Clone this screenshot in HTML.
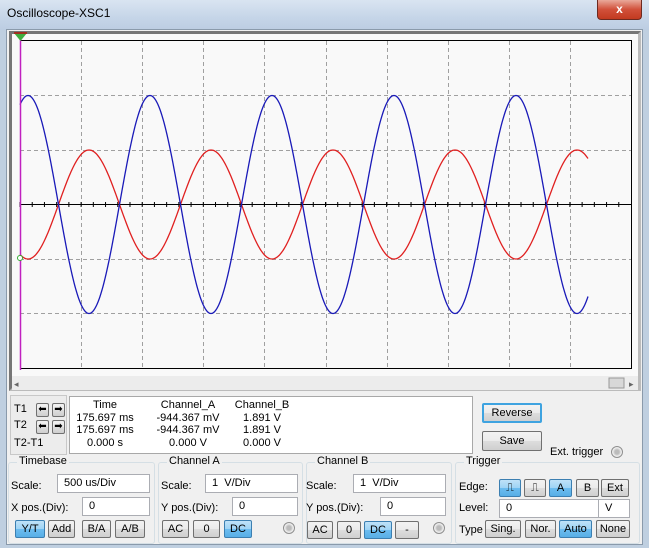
<!DOCTYPE html>
<html><head><meta charset="utf-8"><style>
*{margin:0;padding:0;box-sizing:border-box}
body{width:649px;height:548px;overflow:hidden;background:#bfcfe0;font-family:"Liberation Sans",sans-serif;font-size:11px;color:#000;position:relative}
.a{position:absolute}
.tb{left:0;top:0;width:649px;height:30px;background:linear-gradient(180deg,#d9e4f1,#c5d5e8 60%,#bccde2)}
.body{left:6px;top:29px;width:637px;height:516px;background:#f0f0f0;border:1px solid #8a9aab}
.btn{position:absolute;height:18px;border:1px solid #707070;border-radius:2px;background:linear-gradient(#f2f2f2,#ebebeb 50%,#dddddd 51%,#cfcfcf);text-align:center;line-height:16px;font-size:11px}
.blue{background:linear-gradient(#bfe2f8,#9ed3f5 50%,#6cbdf0 51%,#58aee6);border-color:#3c7fb1}
.fld{position:absolute;height:19px;background:#fff;border:1px solid #abadb3;padding-left:6px;line-height:17px}
.grp{position:absolute;border:1px solid #d5dfe5;border-radius:3px;top:462px;height:82px}
.gl{position:absolute;top:-8px;left:8px;background:#f0f0f0;padding:0 2px}
.rad{position:absolute;width:12px;height:12px;border-radius:50%;border:1px solid #8f8f8f;background:radial-gradient(#bbb 30%,#eee 60%)}
</style></head><body>
<div class="a tb"></div>
<div class="a" style="left:7px;top:6px;font-size:12px">Oscilloscope-XSC1</div>
<div class="a" style="left:597px;top:0;width:45px;height:20px;border:1px solid #6d2a20;border-top:none;border-radius:0 0 4px 4px;background:linear-gradient(#e9a99a,#d1503a 50%,#c23a20);color:#fff;font-weight:bold;text-align:center;line-height:18px;font-size:12px">x</div>
<div class="a body"></div>
<div class="a" style="left:9px;top:31px;width:632px;height:360px;border:3px solid #767676;border-right-color:#bbb;border-bottom-color:#bbb;background:#f9f9f9"></div>
<svg class="a" style="left:0;top:0" width="649" height="400">
<g stroke="#a0a0a0" stroke-dasharray="4,3" stroke-width="1">
<line x1="81.5" y1="41" x2="81.5" y2="368"/><line x1="142.5" y1="41" x2="142.5" y2="368"/><line x1="203.5" y1="41" x2="203.5" y2="368"/><line x1="264.5" y1="41" x2="264.5" y2="368"/><line x1="326.5" y1="41" x2="326.5" y2="368"/><line x1="387.5" y1="41" x2="387.5" y2="368"/><line x1="448.5" y1="41" x2="448.5" y2="368"/><line x1="509.5" y1="41" x2="509.5" y2="368"/><line x1="570.5" y1="41" x2="570.5" y2="368"/>
<line x1="20" y1="95.5" x2="631" y2="95.5"/><line x1="20" y1="150.5" x2="631" y2="150.5"/><line x1="20" y1="259.5" x2="631" y2="259.5"/><line x1="20" y1="313.5" x2="631" y2="313.5"/>
</g>
<line x1="20" y1="204.5" x2="631" y2="204.5" stroke="#000"/>
<g id="ticks" stroke="#000"></g>
<rect x="20.5" y="40.5" width="611" height="328" fill="none" stroke="#000"/>
<polyline id="red" fill="none" stroke="#e02020" stroke-width="1.3"/>
<polyline id="blue" fill="none" stroke="#1a1ab8" stroke-width="1.3"/>
<line x1="20.5" y1="36" x2="20.5" y2="370" stroke="#c020c0" stroke-width="1.5"/>
<polygon points="14,33 27,33 20.5,41" fill="#3fae3f"/>
<rect x="14" y="32" width="13" height="2" fill="#a03020"/>
<circle cx="20" cy="258" r="2.5" fill="#fff" stroke="#3a3"/>
<rect x="12" y="376" width="626" height="14" fill="#ececec"/>
<text x="14" y="387" font-size="9" fill="#666">◂</text>
<rect x="609" y="378" width="15" height="10" fill="#d8d8d8" stroke="#999"/>
<text x="629" y="387" font-size="9" fill="#666">▸</text>
</svg>
<script>
var t=document.getElementById('ticks'),s='';
for(var x=20;x<=631;x+=12.22){s+='<line x1="'+x+'" y1="202" x2="'+x+'" y2="207"/>';}
t.innerHTML=s;
var r='',b='';
for(var x=20;x<=588;x+=1){var p=2*Math.PI*(x-28)/122;
b+=x+','+(204.5-109*Math.cos(p)).toFixed(1)+' ';r+=x+','+(204.5+54.5*Math.cos(p)).toFixed(1)+' ';}
document.getElementById('red').setAttribute('points',r);
document.getElementById('blue').setAttribute('points',b);
</script>
<div class="a" style="left:10px;top:395px;width:57px;height:60px;border:1px solid #c8c8c8;background:#ececec"></div>
<div class="a" style="left:14px;top:403px">T1</div><div class="a" style="left:14px;top:419px">T2</div><div class="a" style="left:14px;top:437px">T2-T1</div>
<div class="btn" style="left:36px;top:403px;width:13px;height:14px;line-height:12px;font-size:10px">⬅</div><div class="btn" style="left:52px;top:403px;width:13px;height:14px;line-height:12px;font-size:10px">➡</div>
<div class="btn" style="left:36px;top:420px;width:13px;height:14px;line-height:12px;font-size:10px">⬅</div><div class="btn" style="left:52px;top:420px;width:13px;height:14px;line-height:12px;font-size:10px">➡</div>
<div class="a" style="left:69px;top:396px;width:404px;height:58px;background:#fff;border:1px solid #a8a8a8"></div>
<div class="a" style="left:75px;top:399px;width:60px;text-align:center;line-height:12.5px">Time<br>175.697 ms<br>175.697 ms<br>0.000 s</div>
<div class="a" style="left:148px;top:399px;width:80px;text-align:center;line-height:12.5px">Channel_A<br>-944.367 mV<br>-944.367 mV<br>0.000 V</div>
<div class="a" style="left:227px;top:399px;width:70px;text-align:center;line-height:12.5px">Channel_B<br>1.891 V<br>1.891 V<br>0.000 V</div>
<div class="btn" style="left:482px;top:403px;width:60px;height:20px;border:2px solid #3ea3e0;line-height:16px">Reverse</div>
<div class="btn" style="left:482px;top:431px;width:60px;height:20px;line-height:18px">Save</div>
<div class="a" style="left:550px;top:446px">Ext. trigger</div><div class="rad" style="left:611px;top:446px"></div>
<div class="grp" style="left:8px;width:147px"><span class="gl">Timebase</span></div>
<div class="grp" style="left:158px;width:145px"><span class="gl">Channel A</span></div>
<div class="grp" style="left:306px;width:146px"><span class="gl">Channel B</span></div>
<div class="grp" style="left:455px;width:185px"><span class="gl">Trigger</span></div>
<div class="a" style="left:11px;top:480px">Scale:</div><div class="fld" style="left:57px;top:474px;width:93px">500 us/Div</div>
<div class="a" style="left:11px;top:502px">X pos.(Div):</div><div class="fld" style="left:82px;top:497px;width:68px">0</div>
<div class="btn blue" style="left:15px;top:520px;width:30px">Y/T</div><div class="btn" style="left:48px;top:520px;width:27px">Add</div><div class="btn" style="left:82px;top:520px;width:29px">B/A</div><div class="btn" style="left:115px;top:520px;width:30px">A/B</div>
<div class="a" style="left:161px;top:480px">Scale:</div><div class="fld" style="left:205px;top:474px;width:93px">1 &nbsp;V/Div</div>
<div class="a" style="left:161px;top:502px">Y pos.(Div):</div><div class="fld" style="left:232px;top:497px;width:66px">0</div>
<div class="btn" style="left:162px;top:520px;width:27px">AC</div><div class="btn" style="left:193px;top:520px;width:27px">0</div><div class="btn blue" style="left:224px;top:520px;width:28px">DC</div><div class="rad" style="left:283px;top:522px"></div>
<div class="a" style="left:306px;top:480px">Scale:</div><div class="fld" style="left:353px;top:474px;width:93px">1 &nbsp;V/Div</div>
<div class="a" style="left:306px;top:502px">Y pos.(Div):</div><div class="fld" style="left:380px;top:497px;width:66px">0</div>
<div class="btn" style="left:307px;top:521px;width:26px">AC</div><div class="btn" style="left:337px;top:521px;width:24px">0</div><div class="btn blue" style="left:364px;top:521px;width:28px">DC</div><div class="btn" style="left:395px;top:521px;width:24px">-</div><div class="rad" style="left:433px;top:522px"></div>
<div class="a" style="left:459px;top:481px">Edge:</div>
<div class="btn blue" style="left:499px;top:479px;width:22px">⎍</div><div class="btn" style="left:524px;top:479px;width:22px">⎍</div><div class="btn blue" style="left:549px;top:479px;width:23px">A</div><div class="btn" style="left:576px;top:479px;width:23px">B</div><div class="btn" style="left:601px;top:479px;width:28px">Ext</div>
<div class="a" style="left:459px;top:502px">Level:</div><div class="fld" style="left:499px;top:499px;width:100px">0</div><div class="fld" style="left:598px;top:499px;width:32px">V</div>
<div class="a" style="left:459px;top:524px">Type</div>
<div class="btn" style="left:485px;top:520px;width:36px">Sing.</div><div class="btn" style="left:525px;top:520px;width:31px">Nor.</div><div class="btn blue" style="left:559px;top:520px;width:33px">Auto</div><div class="btn" style="left:596px;top:520px;width:34px">None</div>
</body></html>
